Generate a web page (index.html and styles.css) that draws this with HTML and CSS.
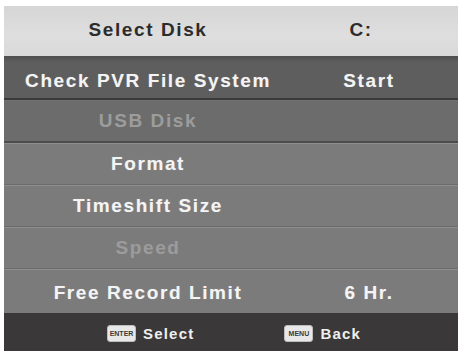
FILE: index.html
```html
<!DOCTYPE html>
<html>
<head>
<meta charset="utf-8">
<link rel="stylesheet" href="styles.css">
</head>
<body>
<div class="panel">
  <div class="row header"><span class="label">Select Disk</span><span class="value">C:</span></div>
  <div class="row active"><span class="label">Check PVR File System</span><span class="value">Start</span></div>
  <div class="row dim dark"><span class="label">USB Disk</span><span class="value"></span></div>
  <div class="row"><span class="label">Format</span><span class="value"></span></div>
  <div class="row"><span class="label">Timeshift Size</span><span class="value"></span></div>
  <div class="row dim"><span class="label">Speed</span><span class="value"></span></div>
  <div class="row last"><span class="label">Free Record Limit</span><span class="value">6 Hr.</span></div>
  <div class="footer">
    <div class="hint"><span class="key">ENTER</span><span>Select</span></div>
    <div class="hint"><span class="key">MENU</span><span>Back</span></div>
  </div>
</div>
</body>
</html>
```
FILE: styles.css
```css
html, body {
  margin: 0;
  padding: 0;
  background: #ffffff;
}
body {
  padding: 6px 4px 0 4px;
  font-family: "Liberation Sans", Arial, sans-serif;
  overflow: hidden;
  height: 351px;
  box-sizing: border-box;
}
.panel {
  width: 454px;
  display: flex;
  flex-direction: column;
  background: #7a7a7a;
}
.row {
  display: grid;
  grid-template-columns: 288px 1fr;
  align-items: center;
  height: 42px;
  box-sizing: border-box;
  border-top: 1px solid #8e8e8e;
  border-bottom: 1px solid #6a6a6a;
  color: #f4f4f4;
  font-weight: bold;
  font-size: 19px;
  letter-spacing: 1.6px;
  background: #7b7b7b;
  text-shadow: 0 0 1px rgba(255, 255, 255, 0.25);
}
.label, .value {
  text-align: center;
  white-space: nowrap;
}
.value {
  padding-right: 12px;
}
.header {
  height: 50px;
  background: linear-gradient(#d6d6d6, #dedede 60%, #d9d9d9);
  color: #2c2c2c;
  border: none;
  padding-bottom: 2px;
  text-shadow: none;
}
.header .value { padding-right: 28px; }
.active {
  height: 44px;
  background: linear-gradient(#4e4e4e, #5e5e5e 15%, #5e5e5e);
  border-top: none;
  border-bottom: 2px solid #3a3a3a;
  padding-top: 8px;
}
.dark {
  height: 43px;
  background: #6c6c6c;
  border-top: 1px solid #727272;
  border-bottom: 2px solid #4c4c4c;
}
.dim {
  color: #9c9c9c;
  text-shadow: none;
}
.last {
  height: 44px;
  border-bottom: none;
  padding-top: 3px;
}
.footer {
  height: 40px;
  background: #3a3838;
  display: flex;
  align-items: center;
  padding-left: 103px;
  gap: 90px;
  padding-bottom: 4px;
}
.hint {
  display: flex;
  align-items: center;
  gap: 7px;
  color: #efefef;
  font-weight: bold;
  font-size: 15px;
  letter-spacing: 1.2px;
}
.key {
  display: inline-block;
  width: 29px;
  height: 17px;
  line-height: 15px;
  border-radius: 3px;
  background: #e8e8e8;
  color: #3a3838;
  font-size: 7px;
  font-weight: bold;
  letter-spacing: 0;
  text-align: center;
  box-sizing: border-box;
  border: 1px solid #bdbdbd;
}
```
